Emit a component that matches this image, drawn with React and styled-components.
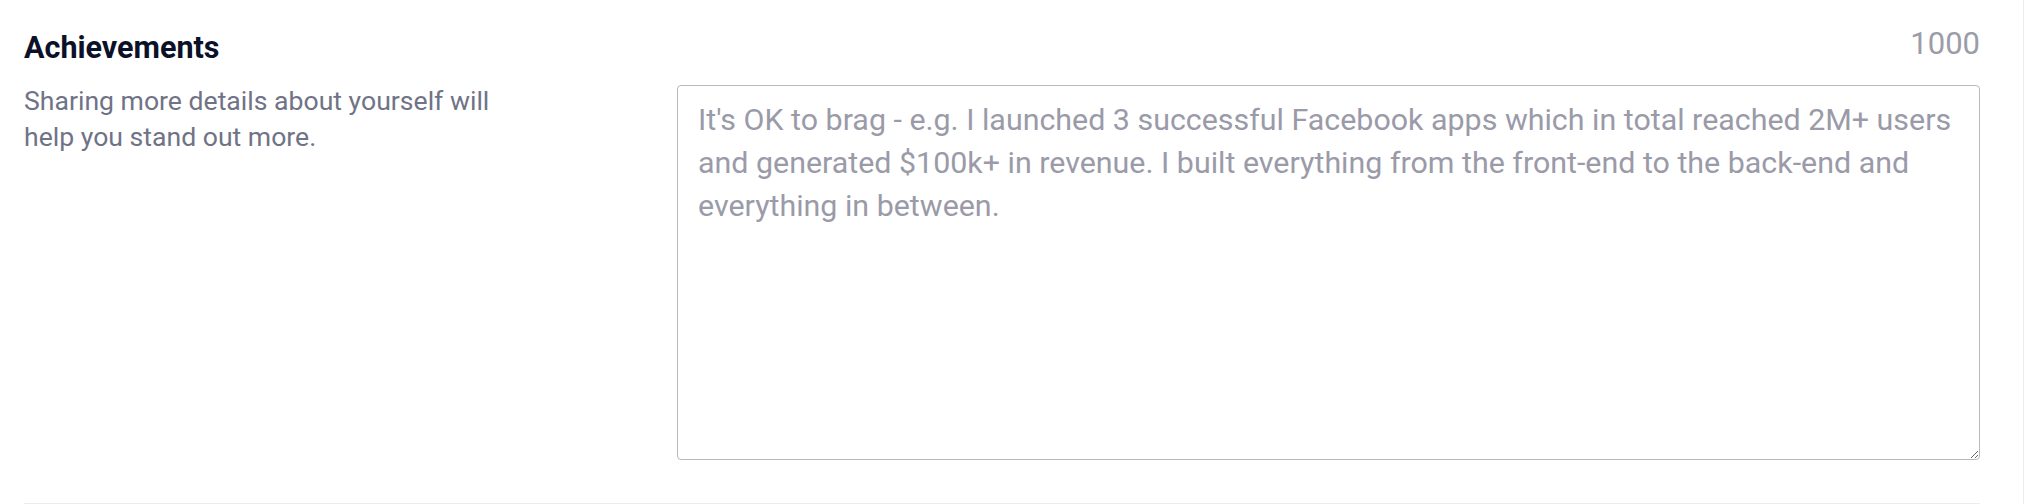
import React from 'react';
import styled, {createGlobalStyle} from 'styled-components';

const GlobalStyle = createGlobalStyle`
    html, body {
        margin: 0;
        padding: 0;
        background: #ffffff;
    }
    body {
        font-family: Roboto, "Liberation Sans", sans-serif;
    }
`;

const Page = styled.div`
    width: 2023px;
    height: 504px;
    border-right: 1px solid #ededed;
    background: #ffffff;
`;

const Section = styled.section`
    display: flex;
    height: 504px;
    box-sizing: border-box;
    margin: 0 43px 0 24px;
    border-bottom: 1px solid #ececec;
`;

const Aside = styled.div`
    width: 653px;
    flex-shrink: 0;
    padding-top: 32px;
`;

const Title = styled.h3`
    margin: 0;
    font-size: 30.5px;
    line-height: 32px;
    font-weight: 700;
    color: #0b1128;
`;

const Hint = styled.p`
    margin: 19px 0 0;
    max-width: 490px;
    font-size: 26.6px;
    line-height: 36px;
    color: #707386;
`;

const Field = styled.div`
    flex: 1;
    display: flex;
    flex-direction: column;
    padding-top: 28px;
`;

const Counter = styled.div`
    align-self: flex-end;
    font-size: 31px;
    line-height: 32px;
    color: #9c9ca8;
`;

const TextArea = styled.textarea`
    margin-top: 25px;
    width: 100%;
    height: 375px;
    box-sizing: border-box;
    padding: 12px 14px 12px 20px;
    border: 1px solid #b9b9b9;
    border-radius: 4px;
    font-family: inherit;
    font-size: 30.4px;
    line-height: 43px;
    color: #2b2d3a;
    resize: vertical;
    outline: none;

    &::placeholder {
        color: #9a9aa8;
    }
`;

export default function App() {
    return (
        <>
            <GlobalStyle />
            <Page>
                <Section>
                    <Aside>
                        <Title>Achievements</Title>
                        <Hint>Sharing more details about yourself will help you stand out more.</Hint>
                    </Aside>
                    <Field>
                        <Counter>1000</Counter>
                        <TextArea
                            maxLength={1000}
                            placeholder="It's OK to brag - e.g. I launched 3 successful Facebook apps which in total reached 2M+ users and generated $100k+ in revenue. I built everything from the front-end to the back-end and everything in between."
                        />
                    </Field>
                </Section>
            </Page>
        </>
    );
}
